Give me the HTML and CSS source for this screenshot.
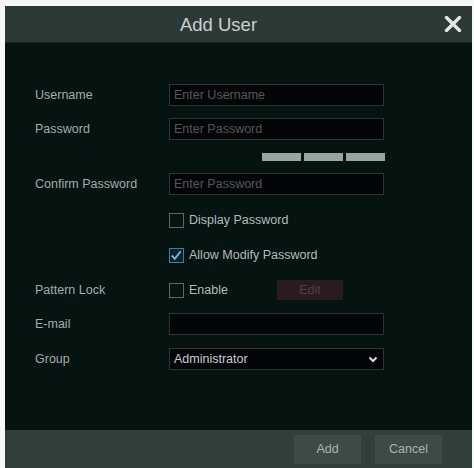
FILE: index.html
```html
<!DOCTYPE html>
<html>
<head>
<meta charset="utf-8">
<link rel="stylesheet" href="styles.css">
</head>
<body>
<div class="dialog">
  <div class="header">
    <div class="title">Add User</div>
    <div class="close">
      <svg width="18" height="16" viewBox="0 0 18 16"><path d="M2.5 1.5 L15.5 14.5 M15.5 1.5 L2.5 14.5" stroke="#e2e7e6" stroke-width="3.4" stroke-linecap="round"/></svg>
    </div>
  </div>
  <div class="body">
    <div class="row r-user">
      <div class="label">Username</div>
      <div class="input placeholder">Enter Username</div>
    </div>
    <div class="row r-pass">
      <div class="label">Password</div>
      <div class="input placeholder">Enter Password</div>
    </div>
    <div class="bars">
      <span class="bar"></span><span class="bar"></span><span class="bar"></span>
    </div>
    <div class="row r-confirm">
      <div class="label">Confirm Password</div>
      <div class="input placeholder">Enter Password</div>
    </div>
    <div class="row r-check1">
      <div class="label"></div>
      <div class="check"><span class="box"></span><span class="ctext">Display Password</span></div>
    </div>
    <div class="row r-check2">
      <div class="label"></div>
      <div class="check"><span class="box checked"><svg width="15" height="15" viewBox="0 0 15 15"><path d="M3 7.5 L6.2 11 L12.5 3" fill="none" stroke="#7fb0cf" stroke-width="2"/></svg></span><span class="ctext">Allow Modify Password</span></div>
    </div>
    <div class="row r-pattern">
      <div class="label">Pattern Lock</div>
      <div class="check enable"><span class="box"></span><span class="ctext">Enable</span></div>
      <div class="edit">Edit</div>
    </div>
    <div class="row r-email">
      <div class="label">E-mail</div>
      <div class="input"></div>
    </div>
    <div class="row r-group">
      <div class="label">Group</div>
      <div class="input select"><span class="value">Administrator</span>
        <svg width="10" height="7" viewBox="0 0 10 7"><path d="M1.5 1.5 L5 5 L8.5 1.5" fill="none" stroke="#d8dedd" stroke-width="2"/></svg>
      </div>
    </div>
  </div>
  <div class="footer">
    <div class="btn">Add</div>
    <div class="btn">Cancel</div>
  </div>
</div>
</body>
</html>
```

FILE: styles.css
```css
html, body {
  margin: 0;
  padding: 0;
  background: #f6f8f8;
}
body {
  font-family: "Liberation Sans", Arial, sans-serif;
  font-size: 12.5px;
}
.dialog {
  margin: 6px 2px 0 5px;
  width: 467px;
  height: 462px;
  display: flex;
  flex-direction: column;
  background: #051311;
}
.header {
  height: 37px;
  background: #2d3936;
  display: flex;
  align-items: center;
  border-bottom: 1px solid #1c2624;
  box-sizing: border-box;
}
.title {
  flex: 1;
  text-align: center;
  color: #c9d0ce;
  font-size: 18.5px;
  padding-top: 1px;
}
.close {
  width: 39px;
  display: flex;
  justify-content: center;
  align-items: center;
  padding-left: 1px;
}
.body {
  flex: 1;
  padding: 41px 0 0 30px;
}
.row {
  display: flex;
  align-items: center;
  height: 22px;
}
.label {
  width: 134px;
  color: #a2acaa;
}
.input {
  width: 215px;
  height: 22px;
  box-sizing: border-box;
  background: #030509;
  border: 1px solid #2b3634;
  padding: 0 4px;
  display: flex;
  align-items: center;
}
.placeholder {
  color: #4f5a58;
}
.r-pass { margin-top: 12px; }
.bars {
  margin: 13px 0 0 227px;
  display: flex;
  gap: 3px;
  height: 8px;
}
.bar {
  width: 39px;
  height: 8px;
  background: #9aa4a2;
}
.r-confirm { margin-top: 12px; }
.r-check1 { margin-top: 14px; }
.r-check2 { margin-top: 13px; }
.r-pattern { margin-top: 13px; }
.r-email { margin-top: 12px; }
.r-group { margin-top: 13px; }
.check {
  display: flex;
  align-items: center;
  gap: 5px;
  color: #b3bcba;
}
.box {
  width: 15px;
  height: 15px;
  box-sizing: border-box;
  border: 1px solid #5d6866;
  display: inline-block;
}
.box.checked {
  border-color: #4d7a98;
  background: #0d2230;
  display: flex;
}
.box.checked svg {
  margin: -1px 0 0 -1px;
}
.enable {
  width: 108px;
}
.edit {
  width: 66px;
  height: 20px;
  background: #2a1c1e;
  color: #4d4244;
  display: flex;
  align-items: center;
  justify-content: center;
}
.select {
  justify-content: space-between;
  padding-right: 5px;
}
.select .value {
  color: #c6cdcc;
}
.footer {
  height: 38px;
  background: #323e3c;
  display: flex;
  justify-content: flex-end;
  align-items: center;
  gap: 14px;
  padding-right: 30px;
}
.btn {
  width: 67px;
  height: 29px;
  background: #3d4a48;
  color: #aab3b1;
  display: flex;
  align-items: center;
  justify-content: center;
}
```
